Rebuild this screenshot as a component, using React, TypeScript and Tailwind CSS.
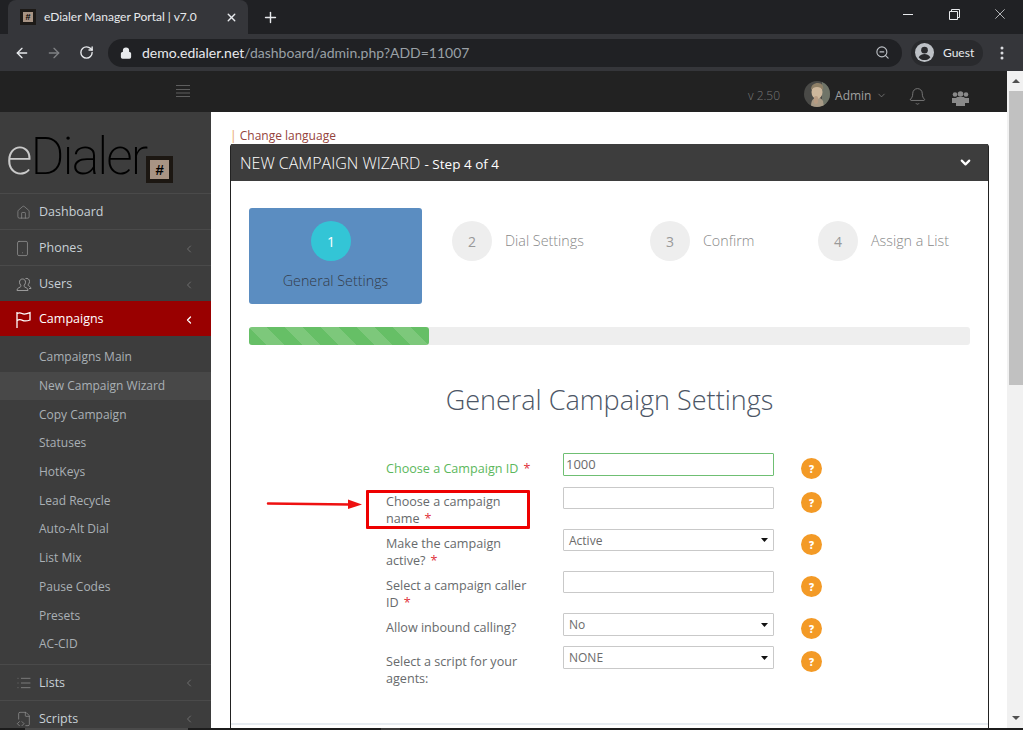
import React from 'react';
import { House, Smartphone, Bell, List, FileCode2, X, Plus, ArrowLeft, ArrowRight, RotateCw, Lock, ZoomOut, ChevronLeft, ChevronDown } from 'lucide-react';

const chromeFont = { fontFamily: 'Lato, sans-serif' };

const Fav = () => (
  <span className="flex h-4 w-4 shrink-0 items-center justify-center bg-[#1d1a17]">
    <span className="flex h-[10px] w-[10px] items-center justify-center bg-[#a89484] text-[9px] font-bold leading-none text-black" style={{ fontFamily: '"Liberation Sans", sans-serif' }}>#</span>
  </span>
);

const NavRow = ({ icon, label, arrow = true }: { icon: React.ReactNode; label: string; arrow?: boolean }) => (
  <div className="flex h-9 items-center border-t border-[#4a4a4a] pr-[16px] pt-[2px] text-[12.500px] text-[#c8d0d6]">
    <span className="flex w-[39px] pl-[16px] text-[#9a9a9a]">{icon}</span>
    <span className="flex-1">{label}</span>
    {arrow && <ChevronLeft size={12} strokeWidth={1.500} className="text-[#7d7d7d]" />}
  </div>
);

const sub = ['Campaigns Main', 'New Campaign Wizard', 'Copy Campaign', 'Statuses', 'HotKeys', 'Lead Recycle', 'Auto-Alt Dial', 'List Mix', 'Pause Codes', 'Presets', 'AC-CID'];

const UsersOutline = () => (
  <svg width="16" height="16" viewBox="0 0 16 16" fill="none" stroke="currentColor" strokeWidth="1">
    <path d="M6.500 2c2 0 3 1.400 3 3.200 0 1.300-.6 2.400-1.300 3v1.300c0 .7 3.800 1.300 3.800 3.500v.5H1v-.5c0-2.200 3.800-2.800 3.800-3.500V8.200C4 7.600 3.500 6.500 3.500 5.200 3.500 3.400 4.500 2 6.500 2z" />
    <path d="M9.500 1.500c2-.5 4 .6 4 3 0 1.200-.5 2.200-1.200 2.800v1.200c0 .6 2.700 1 2.700 3H13" />
  </svg>
);

const Flag = () => (
  <svg width="15" height="18" viewBox="0 0 15 18" fill="none" stroke="currentColor" strokeWidth="1.300">
    <path d="M1 1v16" />
    <path d="M1 2.500c2-1 3.500-.9 5 0s3.500 1 8-.8v7.300c-3.500 1.300-5.500 1.300-7.500.3s-3.500-.8-5.500 0" />
  </svg>
);

const Help = () => (
  <span className="flex h-[21px] w-[21px] items-center justify-center rounded-full bg-[#f39a26] text-[10px] font-extrabold leading-none text-white">?</span>
);

const Caret = () => (
  <svg width="7" height="4" viewBox="0 0 7 4" className="shrink-0"><path d="M0 0h7L3.500 4z" fill="#111" /></svg>
);

const Req = () => <span className="ml-[5px] text-[#e0313a]">*</span>;

const Field = ({ value, select, green, h = 'h-[22px]', nudge }: { value?: string; select?: boolean; green?: boolean; h?: string; nudge?: boolean }) => (
  <div className={`flex w-[211px] shrink-0 items-center justify-between rounded-[1px] border ${h} ${green ? 'border-[#6fbf73] pl-[2px] text-[13px]' : 'border-[#c9c9c9] pl-[5px] text-[12px]'} pr-[5px] leading-none text-[#6b6b6b]`}>
    <span className={nudge ? 'pt-[2px]' : ''}>{value}</span>
    {select && <Caret />}
  </div>
);

const Row = ({ h, label, field, pt = 'pt-[6px]' }: { h: string; label: React.ReactNode; field: React.ReactNode; pt?: string }) => (
  <div className={`flex items-start ${h}`}>
    <div className={`w-[177px] shrink-0 pr-[20px] text-[12.600px] leading-[17px] text-[#676a6c] ${pt}`}>{label}</div>
    {field}
    <div className="ml-[27px] mt-[5px]"><Help /></div>
  </div>
);

const Step = ({ n, label, w }: { n: string; label: string; w: string }) => (
  <div className={`mt-[13px] flex h-[40px] items-center gap-[13px] ${w}`}>
    <span className="flex h-10 w-10 items-center justify-center rounded-full bg-[#eeeeee] text-[14px] text-[#999]">{n}</span>
    <span className="pb-[1px] text-[14.300px] font-light text-[#888]">{label}</span>
  </div>
);

export default function App() {
  return (
    <div className="relative flex h-[730px] w-[1023px] flex-col overflow-hidden bg-white" style={{ fontFamily: '"Open Sans", sans-serif' }}>
      {/* tab strip */}
      <div className="flex h-[34px] shrink-0 items-end bg-[#202124] pl-2 text-[#e8eaed]">
        <div className="flex h-[34px] w-[240px] items-center rounded-t-lg bg-[#35363a] pl-[12px] pr-[10px]">
          <Fav />
          <span className="ml-[8px] flex-1 text-[12px]" style={chromeFont}>eDialer Manager Portal | v7.0</span>
          <X size={13} strokeWidth={2.500} />
        </div>
        <div className="flex h-[34px] w-[40px] items-center justify-center pl-[4px]"><Plus size={17} strokeWidth={2} /></div>
        <div className="flex-1" />
        <div className="flex h-[28px] items-center self-start">
          <span className="flex w-[46px] justify-center"><span className="h-[1px] w-[10px] bg-[#e8eaed]" /></span>
          <span className="relative flex w-[46px] justify-center">
            <svg width="11" height="11" viewBox="0 0 11 11" fill="none" stroke="#e8eaed"><path d="M.500 2.500h8v8h-8zM2.500 2.500v-2h8v8h-2" /></svg>
          </span>
          <span className="flex w-[46px] justify-center"><X size={14} strokeWidth={1} className="scale-125" /></span>
        </div>
      </div>
      {/* toolbar */}
      <div className="flex h-[37px] shrink-0 items-center bg-[#35363a] pl-[14px] pr-[10px] text-[#e8eaed]">
        <ArrowLeft size={16} strokeWidth={2} />
        <ArrowRight size={16} strokeWidth={2} className="ml-[16px] text-[#7f8184]" />
        <RotateCw size={15} strokeWidth={2.200} className="ml-[17px]" />
        <div className="ml-[14px] flex h-[28px] w-[794px] items-center rounded-full bg-[#202124] pl-[12px] pr-[12px]">
          <Lock size={12} strokeWidth={2.500} fill="currentColor" />
          <span className="ml-[10px] flex-1 text-[14px]" style={chromeFont}>demo.edialer.net<span className="text-[#9aa0a6]">/dashboard/admin.php?ADD=11007</span></span>
          <ZoomOut size={15} strokeWidth={1.800} className="text-[#bdc1c6]" />
        </div>
        <div className="ml-[9px] flex h-[26px] w-[72px] items-center rounded-full bg-[#292a2d] pl-[4px]">
          <svg width="19" height="19" viewBox="0 0 20 20"><circle cx="10" cy="10" r="10" fill="#bdc1c6" /><circle cx="10" cy="7.500" r="3.500" fill="#292a2d" /><path d="M3.800 15c1.500-2.500 4-3.300 6.200-3.300s4.700.8 6.200 3.300c-1.500 2-3.700 3-6.200 3s-4.700-1-6.200-3z" fill="#292a2d" /></svg>
          <span className="ml-[9px] text-[12px]" style={chromeFont}>Guest</span>
        </div>
        <svg width="4" height="14" viewBox="0 0 4 14" className="ml-[17px]" fill="#dadce0"><circle cx="2" cy="2" r="1.500" /><circle cx="2" cy="7" r="1.500" /><circle cx="2" cy="12" r="1.500" /></svg>
      </div>
      {/* page */}
      <div className="flex min-h-0 flex-1">
        <div className="flex min-w-0 flex-1 flex-col">
          <div className="flex h-[41px] shrink-0 items-center bg-[#222222] pl-[176px] text-[#8a8a8a]">
            <svg width="14" height="12" viewBox="0 0 14 12" stroke="#5e5e5e" className="mb-[2px]"><path d="M0 .5h14M0 4.500h14M0 8h14M0 11.500h14" /></svg>
            <span className="ml-[558px] mt-[8px] text-[12px] font-light text-[#777]">v 2.50</span>
            <svg width="26" height="26" viewBox="0 0 26 26" className="ml-[24px] mt-[5px] shrink-0">
              <defs><clipPath id="av"><circle cx="13" cy="13" r="13" /></clipPath></defs>
              <g clipPath="url(#av)">
                <rect width="26" height="26" fill="#4a4a47" />
                <rect x="18" width="8" height="26" fill="#6f7468" />
                <path d="M7 26c0-5 1-8 4-9s7 0 8 3l1 6z" fill="#a89a86" />
                <ellipse cx="13" cy="11" rx="5.500" ry="7" fill="#cdb79c" />
                <path d="M7 9c0-5 3-7 7-7s6 3 5 7c-2-2-3-3-6-3s-4 1-6 3z" fill="#8f8067" />
                <rect x="10" y="15" width="4" height="8" rx="2" fill="#b89c83" />
              </g>
            </svg>
            <span className="ml-[5px] mt-[8px] text-[12px] text-[#a0a0a0]">Admin</span>
            <ChevronDown size={11} strokeWidth={1.500} className="ml-[5px] mt-[8px]" />
            <Bell size={19} strokeWidth={1} className="ml-[21px] mt-[10px]" />
            <svg width="17" height="15" viewBox="0 0 17 15" className="ml-[25px] mt-[13px]" fill="#8a8a8a">
              <circle cx="3" cy="3.500" r="2.300" /><circle cx="14" cy="3.500" r="2.300" /><circle cx="8.500" cy="3" r="2.800" />
              <path d="M0 7h5v5H0zM12 7h5v5h-5z" /><path d="M4 7.500c0-1 1-1.500 2-1.500h5c1 0 2 .5 2 1.500V15H4z" />
            </svg>
          </div>
          <div className="flex min-h-0 flex-1">
            {/* sidebar */}
            <div className="w-[211px] shrink-0 overflow-hidden bg-[#3d3d3d]">
              <div className="flex h-[81px] items-start pl-[6px] pt-[14px]">
                <span className="text-[52px] font-[200] leading-[62px] tracking-[-2px] text-black" style={{ fontFamily: 'Roboto, sans-serif' }}><span className="text-[#c9c9c9]">e</span>Dialer</span>
                <span className="mt-[30px] flex h-[27px] w-[27px] items-center justify-center bg-[#1c1712]">
                  <span className="flex h-[19px] w-[19px] items-center justify-center bg-[#a89484] text-[15px] font-bold leading-none text-black" style={{ fontFamily: '"Liberation Sans", sans-serif' }}>#</span>
                </span>
              </div>
              <NavRow icon={<House size={15} strokeWidth={1} />} label="Dashboard" arrow={false} />
              <NavRow icon={<Smartphone size={17} strokeWidth={1} className="-ml-[2px]" />} label="Phones" />
              <NavRow icon={<UsersOutline />} label="Users" />
              <div className="flex h-[35px] items-center bg-[#990000] pr-[16px] pt-[2px] text-[12.500px] text-white">
                <span className="flex w-[39px] pl-[16px]"><Flag /></span>
                <span className="flex-1">Campaigns</span>
                <ChevronLeft size={12} strokeWidth={2.500} />
              </div>
              <div className="pb-[5.300px] pt-[7px]">
                {sub.map((s, i) => (
                  <div key={s} className={`flex h-[28.700px] items-center pl-[39px] text-[12px] text-[#aab0b5] ${i === 1 ? 'bg-[#484848]' : ''}`}>{s}</div>
                ))}
              </div>
              <NavRow icon={<List size={16} strokeWidth={1} />} label="Lists" />
              <NavRow icon={<FileCode2 size={16} strokeWidth={1} />} label="Scripts" />
            </div>
            {/* content */}
            <div className="flex min-w-0 flex-1 flex-col pl-[19px] pr-[18px] pt-[15px]">
              <div className="h-[17px] text-[12px] leading-[17px] text-[#94433c]"><span className="text-[#e8a560]">|</span> Change language</div>
              <div className="flex min-h-0 flex-1 flex-col rounded-t-[3px] border-x border-[#222]">
                <div className="flex h-[37px] shrink-0 items-center justify-between bg-[#3d3d3d] pl-[9px] pr-[15px] text-white">
                  <span className="text-[16px] font-light">NEW CAMPAIGN WIZARD <span className="text-[13.500px] font-normal">- Step 4 of 4</span></span>
                  <ChevronDown size={15} strokeWidth={3.500} />
                </div>
                <div className="flex-1 px-[18px] pt-[27px]">
                  <div className="flex h-[96px]">
                    <div className="mr-[30px] flex h-[96px] w-[173px] flex-col items-center rounded-[3px] bg-[#5b8dc1] pt-[13px]">
                      <span className="mr-[9px] flex h-10 w-10 items-center justify-center rounded-full bg-[#33c5d6] text-[14px] text-white">1</span>
                      <span className="mt-[10px] text-[14.300px] font-light leading-[20px] text-[#333c4a]">General Settings</span>
                    </div>
                    <Step n="2" label="Dial Settings" w="w-[198px]" />
                    <Step n="3" label="Confirm" w="w-[168px]" />
                    <Step n="4" label="Assign a List" w="w-[150px]" />
                  </div>
                  <div className="mt-[23px] h-[18px] rounded-[3px] bg-[#eeeeee]">
                    <div className="h-[18px] w-[180px] rounded-[3px] bg-[repeating-linear-gradient(45deg,#66bf66_0,#66bf66_12.700px,#7dc87b_12.700px,#7dc87b_25.400px)]" />
                  </div>
                  <h1 className="mt-[35px] text-center text-[27px] font-light leading-[40px] text-[#4c5666]">General Campaign Settings</h1>
                  <div className="mt-[33px] pl-[137px]">
                    <Row h="h-[34px]" pt="pt-[7px]" label={<span className="text-[#5cb85c]">Choose a Campaign ID<Req /></span>} field={<Field value="1000" green h="h-[23px]" />} />
                    <Row h="h-[42px]" label={<><span className="block">Choose a campaign</span><span>name<Req /></span></>} field={<Field />} />
                    <Row h="h-[42px]" label={<><span className="block">Make the campaign</span><span>active?<Req /></span></>} field={<Field value="Active" select nudge />} />
                    <Row h="h-[42px]" label={<><span className="block">Select a campaign caller</span><span>ID<Req /></span></>} field={<Field />} />
                    <Row h="h-[33px]" label="Allow inbound calling?" field={<Field value="No" select h="h-[23px]" />} />
                    <Row h="h-[40px]" pt="pt-[7px]" label={<><span className="block">Select a script for your</span><span>agents:</span></>} field={<Field value="NONE" select h="h-[23px]" />} />
                  </div>
                </div>
                <div className="mb-[3px] h-[2px] shrink-0 bg-[#e7ecf1]" />
              </div>
            </div>
          </div>
        </div>
        {/* scrollbar */}
        <div className="flex w-4 shrink-0 flex-col items-end bg-[#f1f1f1]">
          <div className="flex h-[20px] w-full items-center justify-center pl-[2px]"><svg width="8" height="4" viewBox="0 0 8 4"><path d="M0 4h8L4 0z" fill="#505050" /></svg></div>
          <div className="h-[294px] w-[14px] bg-[#c1c1c1]" />
          <div className="flex-1" />
          <div className="flex h-[20px] w-full items-center justify-center pl-[2px]"><svg width="8" height="4" viewBox="0 0 8 4"><path d="M0 0h8L4 4z" fill="#505050" /></svg></div>
        </div>
      </div>
      {/* strip along the bottom edge */}
      <div className="flex h-[2px] shrink-0 bg-[#1c1c1c]">
        <div className="ml-[25px] h-full w-[163px] bg-[#4a4a4a]" />
        <div className="ml-[193px] h-full w-[19px] bg-[#3a3a3a]" />
      </div>
      {/* annotation */}
      <div className="absolute left-[366px] top-[490px] h-[39px] w-[164px] rounded-[1px] border-[3px] border-[#ee0000]" />
      <svg className="absolute left-[266px] top-[498px]" width="98" height="12" viewBox="0 0 98 12">
        <path d="M2 5.500L84 6.500" stroke="#ee1111" strokeWidth="2.500" strokeLinecap="round" />
        <path d="M82 1.500L96 6.500 82 11z" fill="#ee1111" />
      </svg>
    </div>
  );
}
